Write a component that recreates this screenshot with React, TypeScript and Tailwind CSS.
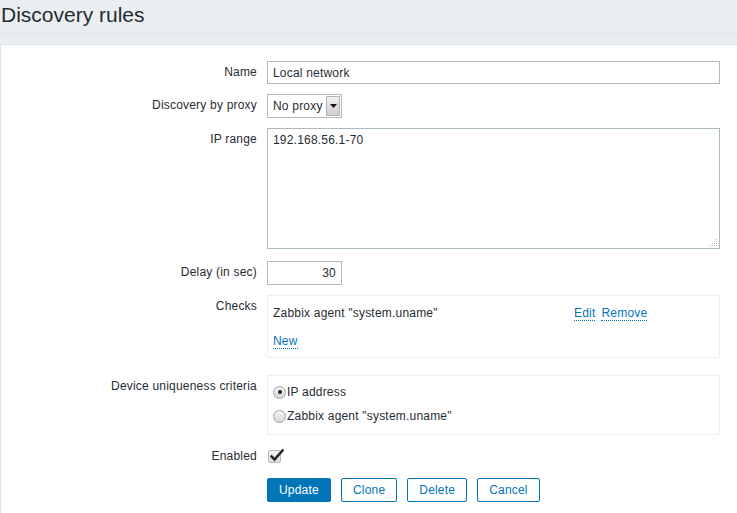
import React from "react";

function Radio({ checked }: { checked?: boolean }) {
  return (
    <span className="relative inline-flex items-center justify-center w-[13px] h-[13px] rounded-full border border-[#a0a0a0] bg-gradient-to-b from-[#f4f4f4] to-[#d8d8d8] mr-[1px]">
      {checked && <span className="w-[4px] h-[4px] rounded-full bg-[#222]" />}
    </span>
  );
}

function Link({ children }: { children: React.ReactNode }) {
  return (
    <span className="text-[#0275b8] border-b border-dotted border-[#0275b8] leading-[14px] cursor-pointer">
      {children}
    </span>
  );
}

function Row({
  label,
  children,
  className = "",
}: {
  label: string;
  children: React.ReactNode;
  className?: string;
}) {
  return (
    <div className={"flex items-start " + className}>
      <div className="w-[266px] shrink-0 pr-[10px] text-right pt-[4px] leading-[14px]">
        {label}
      </div>
      <div className="flex-1">{children}</div>
    </div>
  );
}

export default function App() {
  return (
    <div className="min-h-[513px] bg-[#ebeef0] flex flex-col text-[12px] tracking-[0.2px] text-[#1f2c33] font-['Liberation_Sans',Arial,sans-serif]">
      <div className="h-[34px] border-b border-[#dfe4e7]">
        <h1 className="text-[21px] leading-[24px] pt-[3px] pl-[1px] font-normal tracking-normal">
          Discovery rules
        </h1>
      </div>
      <div className="mt-[10px] flex-1 bg-white border-t border-l border-[#dfe4e7] pt-[16px]">
        <Row label="Name">
          <div className="w-[453px] h-[23px] border border-[#acbbc2] px-[5px] flex items-center">
            Local network
          </div>
        </Row>
        <Row label="Discovery by proxy" className="mt-[10px]">
          <div className="w-[75px] h-[24px] border border-[#acbbc2] flex items-center pl-[5px] pr-[1px] justify-between">
            <span>No proxy</span>
            <span className="w-[14px] h-[20px] bg-gradient-to-b from-[#f0f0f0] to-[#cfcfcf] border border-[#b5b5b5] flex items-center justify-center">
              <svg width="7" height="4" viewBox="0 0 7 4">
                <path d="M0 0h7L3.5 4z" fill="#111" />
              </svg>
            </span>
          </div>
        </Row>
        <Row label="IP range" className="mt-[10px]">
          <div className="relative w-[453px] h-[121px] border border-[#acbbc2] px-[5px] pt-[4px] leading-[14px]">
            192.168.56.1-70
            <svg
              className="absolute right-[1px] bottom-[1px]"
              width="9"
              height="9"
              viewBox="0 0 9 9"
            >
              <g fill="#b8b8b8">
                <rect x="7" y="1" width="1" height="1" />
                <rect x="5" y="3" width="1" height="1" />
                <rect x="7" y="3" width="1" height="1" />
                <rect x="3" y="5" width="1" height="1" />
                <rect x="5" y="5" width="1" height="1" />
                <rect x="7" y="5" width="1" height="1" />
                <rect x="1" y="7" width="1" height="1" />
                <rect x="3" y="7" width="1" height="1" />
                <rect x="5" y="7" width="1" height="1" />
                <rect x="7" y="7" width="1" height="1" />
              </g>
            </svg>
          </div>
        </Row>
        <Row label="Delay (in sec)" className="mt-[12px]">
          <div className="w-[75px] h-[24px] border border-[#acbbc2] px-[5px] flex items-center justify-end">
            30
          </div>
        </Row>
        <Row label="Checks" className="mt-[10px]">
          <div className="w-[453px] border border-[#ebeef0] pt-[10px] pb-[9px] pl-[5px] leading-[14px]">
            <div className="flex">
              <span className="w-[301px]">Zabbix agent "system.uname"</span>
              <Link>Edit</Link>
              <span className="ml-[6px]">
                <Link>Remove</Link>
              </span>
            </div>
            <div className="mt-[13px]">
              <Link>New</Link>
            </div>
          </div>
        </Row>
        <Row label="Device uniqueness criteria" className="mt-[17px]">
          <div className="w-[453px] border border-[#ebeef0] pt-[4px] pb-[6px] pl-[5px]">
            <div className="h-[24px] flex items-center">
              <Radio checked />
              <span>IP address</span>
            </div>
            <div className="h-[24px] flex items-center">
              <Radio />
              <span>Zabbix agent "system.uname"</span>
            </div>
          </div>
        </Row>
        <Row label="Enabled" className="mt-[10px]">
          <div className="h-[22px] flex items-center pl-[1px]">
            <span className="relative w-[13px] h-[13px] border border-[#b8b8b8] bg-gradient-to-b from-[#f6f6f6] to-[#e2e2e2] rounded-[2px]">
              <svg
                className="absolute left-[1px] top-[-3px]"
                width="14"
                height="14"
                viewBox="0 0 14 14"
              >
                <path
                  d="M1.5 8.5 L4.5 11.5 L12.5 2.5"
                  fill="none"
                  stroke="#2a2a2a"
                  strokeWidth="2.6"
                  strokeLinecap="square"
                />
              </svg>
            </span>
          </div>
        </Row>
        <div className="flex mt-[11px] pl-[266px] gap-[10px]">
          <button className="h-[24px] px-[11px] bg-[#0275b8] border border-[#0275b8] text-white rounded-[2px]">
            Update
          </button>
          <button className="h-[24px] px-[11px] bg-white border border-[#0275b8] text-[#0275b8] rounded-[2px]">
            Clone
          </button>
          <button className="h-[24px] px-[11px] bg-white border border-[#0275b8] text-[#0275b8] rounded-[2px]">
            Delete
          </button>
          <button className="h-[24px] px-[11px] bg-white border border-[#0275b8] text-[#0275b8] rounded-[2px]">
            Cancel
          </button>
        </div>
      </div>
    </div>
  );
}
